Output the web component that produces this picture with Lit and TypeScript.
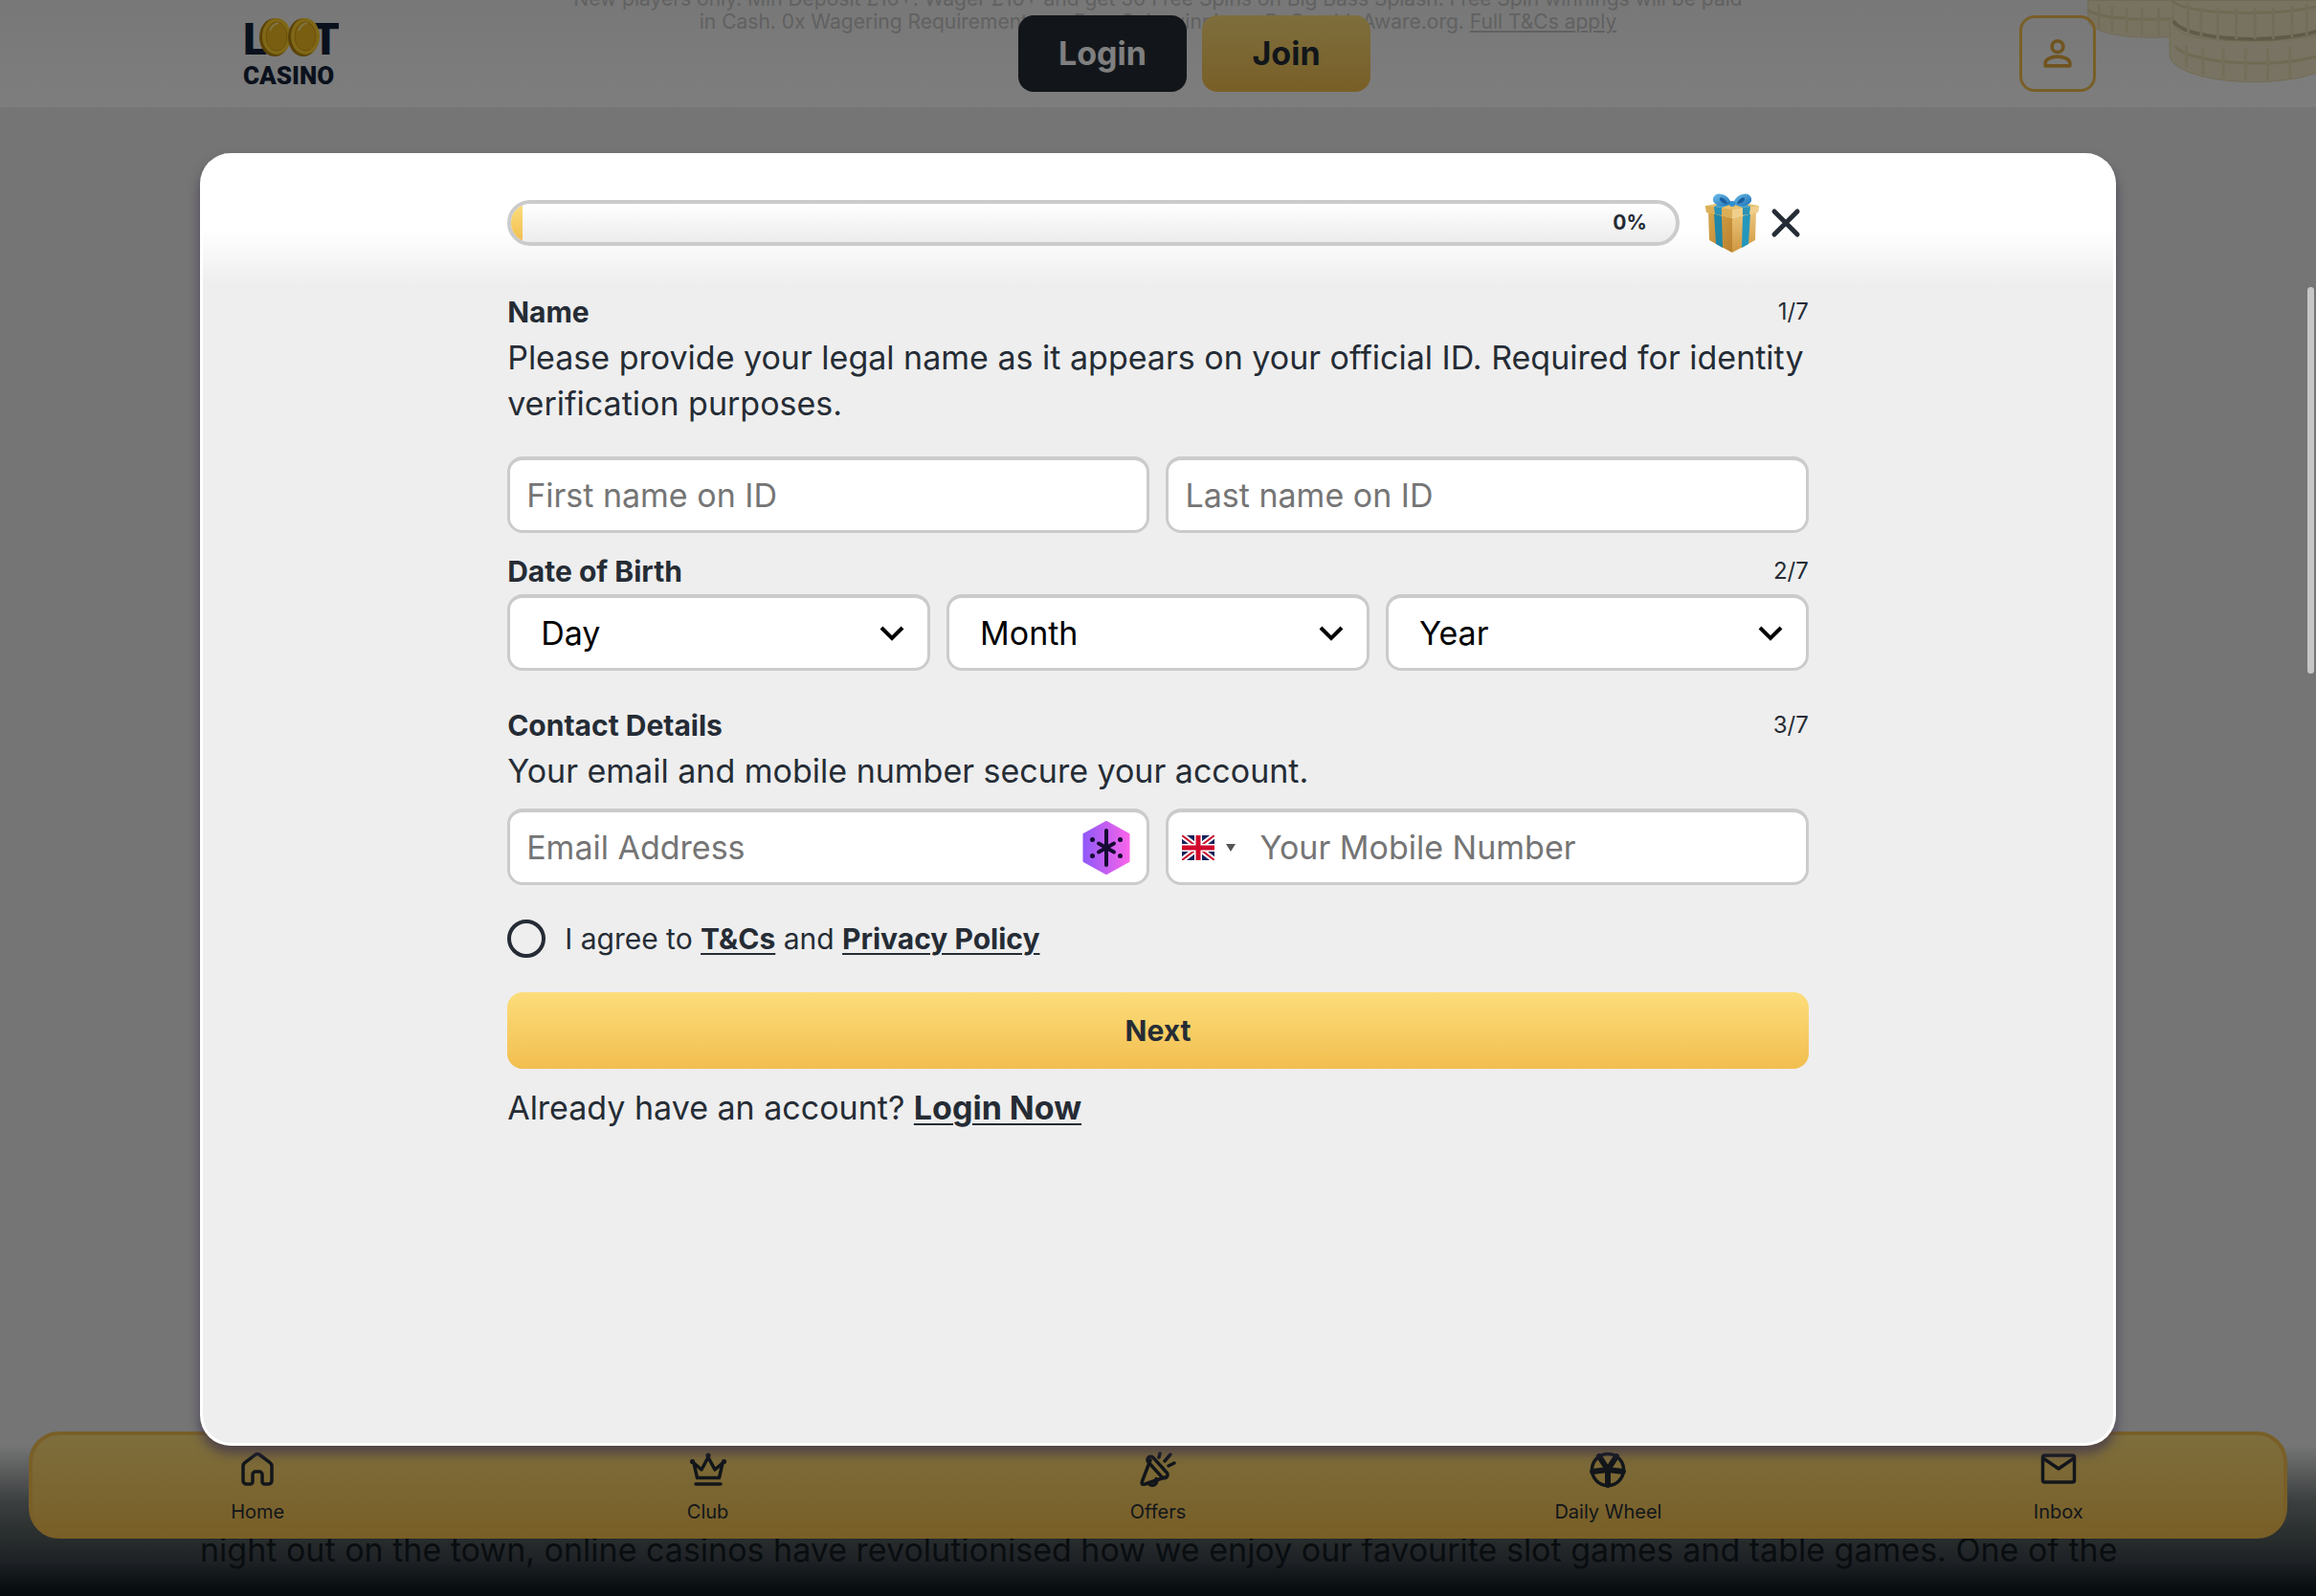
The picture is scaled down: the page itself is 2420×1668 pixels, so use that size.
import { LitElement, html, css, svg } from "lit";
import { customElement, state } from "lit/decorators.js";

const person = html`<svg class="icon-person" viewBox="0 0 24 24" fill="none" stroke="currentColor" stroke-width="2" aria-hidden="true">
  <circle cx="12" cy="8" r="3.2" />
  <path d="M5 19v-1.500c0-2.600 4-3.800 7-3.800s7 1.200 7 3.800V19z" stroke-linejoin="round" />
</svg>`;

const gift = html`<svg class="gift" viewBox="0 0 58 64" aria-hidden="true">
  <defs>
    <linearGradient id="boxL" x1="0" x2="1" y1="0" y2="1"><stop offset="0" stop-color="#d9a84e" /><stop offset="1" stop-color="#b97f2c" /></linearGradient>
    <linearGradient id="boxR" x1="0" x2="0" y1="0" y2="1"><stop offset="0" stop-color="#ecc67c" /><stop offset="1" stop-color="#cf9740" /></linearGradient>
    <linearGradient id="bow" x1="0" x2="1" y1="0" y2="1"><stop offset="0" stop-color="#6fc0ea" /><stop offset="1" stop-color="#1d6fb5" /></linearGradient>
  </defs>
  <path d="M4 20 29 27v36L5 50z" fill="url(#boxL)" />
  <path d="M54 20 29 27v36l24-13z" fill="url(#boxR)" />
  <path d="M10 22l8 3 1 33-7-4z" fill="#1f86a8" />
  <path d="M48 22l-8 3-1 33 7-4z" fill="#2497bd" />
  <path d="M1 14 29 9l28 5-1 7-27 5-27-5z" fill="#e7c06f" />
  <path d="M1 14 29 18v9L2 21z" fill="#dcae58" />
  <path d="M57 14 29 18v9l27-6z" fill="#efcf8b" />
  <path d="M10 15l8 1v8l-7-1zM48 15l-8 1v8l7-1z" fill="#2a93b8" />
  <path d="M29 12 39 10l9 5-8 1zM29 12 19 10l-9 5 8 1z" fill="#3ba0cf" />
  <path d="M28 12C20 16 11 14 9 9 8 4 13 0 18 2c5 1 9 5 10 10z" fill="url(#bow)" />
  <path d="M30 12c8 4 17 2 19-3 1-5-4-9-9-7-5 1-9 5-10 10z" fill="url(#bow)" />
  <path d="M24 12c-3 0-8-2-8-5s6-1 8 5zM34 12c3 0 8-2 8-5s-6-1-8 5z" fill="#1a5f9d" />
  <circle cx="29" cy="12" r="3" fill="#2f8fd0" />
</svg>`;

const hexMark = html`<svg class="hex" viewBox="0 0 50 56" aria-hidden="true">
  <defs><linearGradient id="hexg" x1="0" x2="1" y1="0" y2="0"><stop offset="0" stop-color="#9159f8" /><stop offset="1" stop-color="#f864ea" /></linearGradient></defs>
  <path d="M25 1 48.500 14v28L25 55 1.500 42V14z" fill="url(#hexg)" stroke="url(#hexg)" stroke-width="2" stroke-linejoin="round" />
  <path d="M25 10v36" stroke="#160b33" stroke-width="4" stroke-linecap="round" />
  <path d="M17 23.500l16 9M33 23.500l-16 9" stroke="#160b33" stroke-width="4" stroke-linecap="round" />
  <g fill="#160b33"><circle cx="10.500" cy="19.500" r="2.500" /><circle cx="39.500" cy="19.500" r="2.500" /><circle cx="10.500" cy="36.500" r="2.500" /><circle cx="39.500" cy="36.500" r="2.500" /></g>
</svg>`;

const flag = html`<svg class="flag" viewBox="0 0 34 26" preserveAspectRatio="none" aria-hidden="true">
  <path d="M0 0h34v26H0z" fill="#14205a" />
  <path d="M0 0 34 26M34 0 0 26" stroke="#fff" stroke-width="6" />
  <path d="M0 0 34 26M34 0 0 26" stroke="#c8102e" stroke-width="2" />
  <path d="M17 0v26M0 13h34" stroke="#fff" stroke-width="8" />
  <path d="M17 0v26M0 13h34" stroke="#d0082c" stroke-width="5" />
</svg>`;

const coins = html`<svg class="coins" viewBox="0 0 250 90" aria-hidden="true">
  <g fill="#f0e4b8" stroke="#dccd94" stroke-width="1">
    <path d="M4 0v20c0 14 34 20 70 20s70-6 70-20V0z" />
    <path d="M4 10c12 14 128 14 140 0" fill="none" stroke-width="3" />
    <path d="M92 20v38c0 20 50 30 90 30s84-8 84-26V20z" />
    <path d="M96 0v24c0 16 44 20 82 20s90-4 90-20V0z" />
    <path d="M96 22c14 26 150 26 172 2" fill="none" stroke="#b5a878" stroke-width="4" />
    <path d="M94 0c14 18 150 18 172 0M98 50c20 22 140 24 166 4" fill="none" stroke-width="3" />
  </g>
  <path d="M16 4v26M30 6v28M46 8v28M62 8v30M80 8v30M112 2v34M126 8v32M144 8v34M164 8v34M184 8v34M204 8v34M224 6v34M240 4v34M110 48v24M128 52v28M150 52v32M174 52v34M198 52v34M222 50v34" stroke="#e3d6a2" stroke-width="3" />
</svg>`;

const logoCoin = (cx: number) => svg`<g>
  <ellipse cx=${cx - 1} cy="23" rx="16" ry="20" fill="#b8860f" />
  <ellipse cx=${cx + 1} cy="22" rx="15" ry="19" fill="#ffd02e" />
  <ellipse cx=${cx + 1} cy="22" rx="11" ry="15" fill="#f3bd22" stroke="#d99d12" stroke-width="1" />
  <path d=${`M${cx - 6} 16q3-7 9-8`} stroke="#ffe98c" stroke-width="2" fill="none" />
</g>`;

const navIcons = {
  home: svg`<path d="M5 16.500v15A3.500 3.500 0 0 0 8.500 35h4a2.500 2.500 0 0 0 2.500-2.500V25a3 3 0 0 1 3-3h4a3 3 0 0 1 3 3v7.500a2.500 2.500 0 0 0 2.500 2.500h4a3.500 3.500 0 0 0 3.500-3.500v-15a5 5 0 0 0-1.800-3.800L22.500 4.500a4 4 0 0 0-5 0L6.800 12.700A5 5 0 0 0 5 16.500z" />`,
  crown: svg`<path d="M5 13l3.500 15.500h23L35 13l-8 7-7-13-7 13z" /><path d="M7 35h26" /><g fill="currentColor" stroke="none"><circle cx="3.500" cy="11.500" r="2.600" /><circle cx="20" cy="5" r="2.600" /><circle cx="36.500" cy="11.500" r="2.600" /></g>`,
  offers: svg`<path d="M12 10 3.500 32c-1 3 0 4 3 3L27 28" /><rect x="5.500" y="14" width="28" height="7" rx="3.500" transform="rotate(48 19.500 17.500)" /><path d="M10 34.500c4 4 11 0 8-5" /><path d="M21 7l1-4M27 11l6-7M31 16l6-3" />`,
  wheel: svg`<circle cx="20" cy="20" r="16.500" /><circle cx="20" cy="20" r="4" fill="currentColor" stroke="none" /><path d="M20 20 11 6M20 20 29 6M20 20 4 22M20 20l16 2M20 20v16" stroke-width="6" />`,
  mail: svg`<rect x="3.500" y="5" width="33" height="28" rx="2" /><path d="M4 8l16 11L36 8" stroke-linecap="butt" />`,
};

const navItems = [
  { label: "Home", icon: navIcons.home },
  { label: "Club", icon: navIcons.crown },
  { label: "Offers", icon: navIcons.offers },
  { label: "Daily Wheel", icon: navIcons.wheel },
  { label: "Inbox", icon: navIcons.mail },
];

@customElement("app-root")
export class AppRoot extends LitElement {
  @state() private progress = 0;

  static styles = css`
    :host {
      display: block;
      --ink: #252c35;
      --line: #cbcbcb;
      --gold: linear-gradient(#fcdd7b, #f2be4f);
      font-family: Inter, "Open Sans", sans-serif;
      font-size: 34px;
      line-height: 48px;
      color: var(--ink);
    }
    * { box-sizing: border-box; }
    button, input, select { font: inherit; color: inherit; margin: 0; }
    a { color: inherit; }
    h2, p { margin: 0; }

    .page {
      position: relative;
      display: flex;
      flex-direction: column;
      min-height: 100vh;
      background: #ebebeb;
      overflow: hidden;
    }
    .top { display: grid; background: #fcfcfc; }
    .top > * { grid-area: 1 / 1; }
    .hero {
      height: 112px;
      overflow: hidden;
      display: flex;
      justify-content: center;
      align-items: flex-end;
      padding-bottom: 77px;
      background: linear-gradient(#f0f0f0, #fcfcfc);
      color: #c2c2c2;
      font-size: 21px;
      line-height: 24px;
      text-align: center;
      white-space: nowrap;
    }
    .coins { position: absolute; top: 0; right: 0; width: 242px; height: 88px; opacity: 0.8; }
    .bar {
      position: relative;
      display: grid;
      grid-template-columns: 1fr auto 1fr;
      align-items: center;
      height: 112px;
      padding: 16px 230px 16px 254px;
    }
    .logo { display: block; width: 100px; height: 80px; }
    .logo text { font-family: Roboto, sans-serif; font-weight: 900; fill: #14233a; }
    .auth { display: flex; gap: 16px; padding-left: 52px; }
    .auth button {
      width: 176px;
      height: 80px;
      border: 0;
      border-radius: 16px;
      font-weight: 700;
      background: var(--gold);
    }
    .auth .login { background: var(--ink); color: #fff; }
    .profile {
      justify-self: end;
      display: grid;
      place-items: center;
      width: 80px;
      height: 80px;
      padding: 0;
      border: 3px solid #f2be4f;
      border-radius: 16px;
      background: none;
    }
    .icon-person { width: 44px; height: 44px; color: #e0a93e; }

    .article { position: relative; z-index: 1; margin-top: auto; padding: 0 209px 24px; white-space: nowrap; color: #121b21; }
    .fade {
      position: absolute;
      inset: auto 0 0;
      height: 168px;
      background: linear-gradient(rgba(100, 108, 110, 0) 6%, rgba(88, 97, 98, 0.8) 42%, #56605f 60%, #3e444c 78%, #182428 92%, #0a1418);
    }
    .tabs {
      position: absolute;
      z-index: 2;
      inset: auto 30px 60px;
      display: grid;
      grid-template-columns: repeat(5, 1fr);
      height: 112px;
      border: 4px solid #f2be4f;
      border-radius: 32px;
      background: var(--gold);
    }
    .tab {
      display: flex;
      flex-direction: column;
      align-items: center;
      padding-top: 16px;
      gap: 12px;
      font-size: 20px;
      line-height: 24px;
      text-decoration: none;
    }
    .tab svg { width: 40px; height: 40px; fill: none; stroke: currentColor; stroke-width: 3.500; stroke-linecap: round; stroke-linejoin: round; }

    .backdrop { position: absolute; z-index: 3; inset: 0; background: rgba(0, 0, 0, 0.5); padding-top: 160px; }
    .modal {
      width: 82.75%;
      min-height: 81vh;
      margin: 0 auto;
      border: 3px solid #fff;
      border-top: 0;
      border-radius: 32px;
      background: linear-gradient(#fff 80px, #eee 138px);
      box-shadow: 0 8px 12px rgba(60, 50, 80, 0.7);
    }
    .form { display: block; width: 68.1%; margin: 0 auto; padding-top: 43px; }
    .progress { display: flex; align-items: center; height: 60px; margin-bottom: 39px; }
    .track {
      flex: 1;
      display: flex;
      align-items: center;
      height: 48px;
      margin-right: 26px;
      border: 4px solid var(--line);
      border-radius: 24px;
      overflow: hidden;
      background: linear-gradient(#fff, #ececec);
    }
    .fill { align-self: stretch; min-width: 12px; background: var(--gold); }
    .percent { margin-left: auto; padding-right: 30px; font-size: 21px; font-weight: 700; }
    .gift { width: 58px; height: 64px; }
    .close { display: grid; place-items: center; width: 48px; height: 48px; padding: 0; border: 0; margin-left: 3px; background: none; }
    .close svg { width: 32px; height: 32px; }

    .head { display: flex; justify-content: space-between; align-items: center; }
    .head h2 { font-size: 30px; line-height: 48px; font-weight: 700; }
    .count { font-size: 24px; }
    .row { display: grid; grid-auto-flow: column; grid-auto-columns: 1fr; gap: 17px; }
    .names { margin: 31px 0 16px; }
    .dates { margin-bottom: 33px; }
    .contacts { margin: 15px 0 36px; }
    .box {
      display: flex;
      align-items: center;
      min-width: 0;
      height: 80px;
      border: 3px solid var(--line);
      border-top-width: 4px;
      border-radius: 16px;
      background: #fff;
      overflow: hidden;
    }
    .box input { flex: 1; min-width: 0; height: 100%; padding: 0 17px; border: 0; outline: 0; background: none; }
    .box input::placeholder { color: #757575; opacity: 1; }
    .pick { display: grid; align-items: center; }
    .pick > * { grid-area: 1 / 1; }
    .pick select { appearance: none; width: 100%; height: 100%; padding: 0 32px; border: 0; background: none; color: #000; }
    .pick svg { justify-self: end; width: 26px; height: 26px; margin-right: 24px; pointer-events: none; }
    .hex { width: 50px; height: 56px; margin-right: 17px; }
    .country { display: flex; align-items: center; gap: 12px; height: 100%; padding: 0 8px 0 14px; border: 0; background: none; }
    .flag { width: 34px; height: 26px; }
    .caret { width: 10px; height: 8px; }

    .agree { display: flex; align-items: center; gap: 20px; height: 40px; margin-bottom: 36px; font-size: 30px; }
    .agree input { appearance: none; width: 40px; height: 40px; border: 4px solid var(--ink); border-radius: 50%; }
    .agree a, .switch a { font-weight: 700; text-underline-offset: 4px; text-decoration-thickness: 2px; }
    .next { display: block; width: 100%; height: 80px; margin-bottom: 17px; border: 0; border-radius: 16px; background: var(--gold); font-size: 30px; font-weight: 700; }

    .thumb { position: absolute; top: 300px; right: 2px; z-index: 4; width: 7px; height: 404px; border-radius: 4px; background: #c6c6c6; }
  `;

  private section(title: string, step: number) {
    return html`<div class="head"><h2>${title}</h2><span class="count">${step}/7</span></div>`;
  }

  private picker(name: string) {
    return html`<div class="box pick">
      <select aria-label=${name}><option>${name}</option></select>
      <svg viewBox="0 0 26 26" fill="none" stroke="#000" stroke-width="4" aria-hidden="true"><path d="M2 7l11 11L24 7" /></svg>
    </div>`;
  }

  render() {
    return html`
      <div class="page">
        <header class="top">
          <div class="hero">
            <p>New players only. Min Deposit £10+. Wager £10+ and get 50 Free Spins on Big Bass Splash. Free Spin winnings will be paid<br />
              in Cash. 0x Wagering Requirements on Free Spin winnings. BeGambleAware.org. <a href="#terms">Full T&amp;Cs apply</a></p>
          </div>
          ${coins}
          <div class="bar">
            <svg class="logo" viewBox="0 0 100 80" role="img" aria-label="Loot Casino">
              <text x="0" y="41" font-size="46">L</text>
              <text x="72" y="41" font-size="46">T</text>
              ${logoCoin(34)}${logoCoin(64)}
              <text x="0" y="72" font-size="26">CASINO</text>
            </svg>
            <div class="auth">
              <button class="login" type="button">Login</button>
              <button type="button">Join</button>
            </div>
            <button class="profile" type="button" aria-label="Profile">${person}</button>
          </div>
        </header>

        <p class="article">night out on the town, online casinos have revolutionised how we enjoy our favourite slot games and table games. One of the</p>
        <div class="fade"></div>
        <nav class="tabs">
          ${navItems.map((item) => html`<a class="tab" href="#"><svg viewBox="0 0 40 40" aria-hidden="true">${item.icon}</svg>${item.label}</a>`)}
        </nav>

        <div class="backdrop">
          <section class="modal" role="dialog" aria-label="Registration">
            <form class="form">
              <div class="progress">
                <div class="track">
                  <div class="fill" style="width:${this.progress}%"></div>
                  <span class="percent">${this.progress}%</span>
                </div>
                ${gift}
                <button class="close" type="button" aria-label="Close">
                  <svg viewBox="0 0 32 32" stroke="currentColor" stroke-width="5" stroke-linecap="round" aria-hidden="true"><path d="M4 4l24 24M28 4 4 28" /></svg>
                </button>
              </div>

              ${this.section("Name", 1)}
              <p>Please provide your legal name as it appears on your official ID. Required for identity verification purposes.</p>
              <div class="row names">
                <div class="box"><input type="text" aria-label="First name" placeholder="First name on ID" /></div>
                <div class="box"><input type="text" aria-label="Last name" placeholder="Last name on ID" /></div>
              </div>

              ${this.section("Date of Birth", 2)}
              <div class="row dates">${["Day", "Month", "Year"].map((name) => this.picker(name))}</div>

              ${this.section("Contact Details", 3)}
              <p>Your email and mobile number secure your account.</p>
              <div class="row contacts">
                <div class="box"><input type="email" aria-label="Email Address" placeholder="Email Address" />${hexMark}</div>
                <div class="box">
                  <button class="country" type="button" aria-label="Country code">
                    ${flag}
                    <svg class="caret" viewBox="0 0 10 8" aria-hidden="true"><path d="M0 0h10L5 8z" fill="#555" /></svg>
                  </button>
                  <input type="tel" aria-label="Your Mobile Number" placeholder="Your Mobile Number" />
                </div>
              </div>

              <div class="agree">
                <input id="agree" type="checkbox" />
                <label for="agree">I agree to <a href="#terms">T&amp;Cs</a> and <a href="#privacy">Privacy Policy</a></label>
              </div>
              <button class="next" type="button">Next</button>
              <p class="switch">Already have an account? <a href="#login">Login Now</a></p>
            </form>
          </section>
        </div>
        <div class="thumb"></div>
      </div>
    `;
  }
}
